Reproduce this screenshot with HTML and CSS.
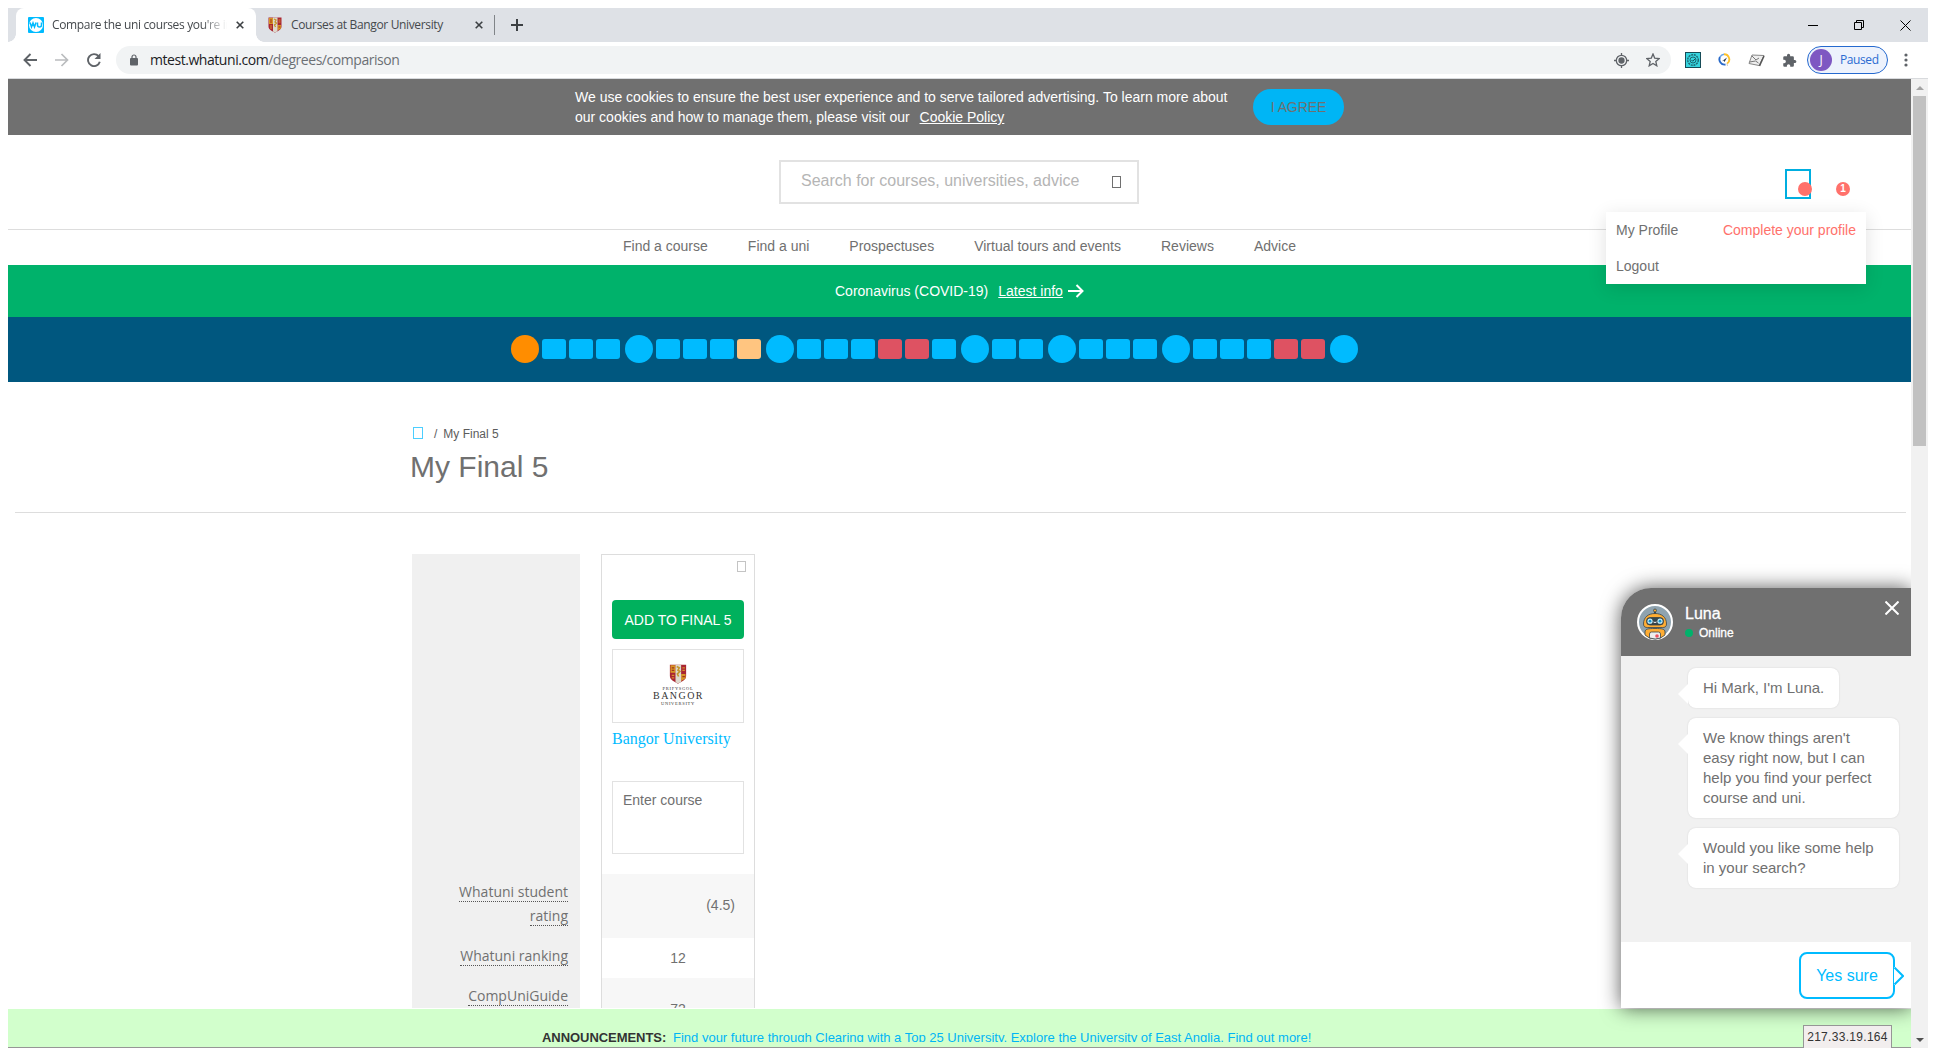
FILE: index.html
```html
<!DOCTYPE html>
<html lang="en">
<head>
<meta charset="utf-8">
<title>Compare the uni courses you're interested in</title>
<link rel="stylesheet" href="styles.css">
</head>
<body>
<div class="window">
  <header class="tabstrip">
    <div class="tab active">
      <svg class="favicon wu" viewBox="0 0 16 16"><rect width="16" height="16" rx="1" fill="#0bf"/><circle cx="8" cy="8" r="7" fill="#fff"/><path d="M2 5.500l1.500 4.500L5 6l1.500 4L8 5.500M9.500 5.500V8q0 2 2 2t2-2V5.500" fill="none" stroke="#0bf" stroke-width="1.500"/></svg>
      <span class="tab-title fade">Compare the uni courses you're in</span>
      <svg class="x" viewBox="0 0 8 8"><path d="M.7.7l6.600 6.600M7.300.7L.7 7.300" stroke="#3c4043" stroke-width="1.600"/></svg>
    </div>
    <div class="tab second">
      <svg class="favicon crest" viewBox="0 0 14 16"><use href="#crest"/></svg>
      <span class="tab-title">Courses at Bangor University</span>
      <svg class="x" viewBox="0 0 8 8"><path d="M.7.7l6.600 6.600M7.300.7L.7 7.300" stroke="#3c4043" stroke-width="1.600"/></svg>
    </div>
    <i class="tab-divider"></i>
    <svg class="plus" viewBox="0 0 12 12"><path d="M6 0v12M0 6h12" stroke="#3c4043" stroke-width="2"/></svg>
    <div class="win-controls">
      <svg width="10" height="10" viewBox="0 0 10 10"><path d="M0 5.500h10" stroke="#000"/></svg>
      <svg width="10" height="10" viewBox="0 0 10 10" fill="none" stroke="#000"><path d="M.5 2.500h7v7h-7zM2.500 2.500v-2h7v7h-2"/></svg>
      <svg width="11" height="11" viewBox="0 0 11 11"><path d="M.5.5l10 10M10.500.5l-10 10" stroke="#000"/></svg>
    </div>
  </header>
  <div class="toolbar">
    <svg class="back" viewBox="0 0 14 14"><path d="M14 7H2M7.500 1L1.500 7l6 6" fill="none" stroke="#5f6368" stroke-width="1.900"/></svg>
    <svg class="forward" viewBox="0 0 14 14"><path d="M0 7h12M6.500 1l6 6-6 6" fill="none" stroke="#babcbe" stroke-width="1.700"/></svg>
    <svg class="reload" viewBox="0 0 14 14"><path d="M11.600 3.200A6 6 0 1 0 12.800 8.800" fill="none" stroke="#5f6368" stroke-width="1.900"/><path d="M13.500 0v6H7.500z" fill="#5f6368"/></svg>
    <div class="omnibox">
      <svg class="lock" viewBox="0 0 8 12"><rect y="4" width="8" height="7.500" rx="1" fill="#5f6368"/><path d="M2 4.500V3a2 2 0 0 1 4 0v1.500" fill="none" stroke="#5f6368" stroke-width="1.200"/></svg>
      <span class="url"><b>mtest.whatuni.com</b>/degrees/comparison</span>
      <svg class="locate" viewBox="0 0 15 15" fill="none" stroke="#5f6368" stroke-width="1.300"><circle cx="7.500" cy="7.500" r="5.200"/><circle cx="7.500" cy="7.500" r="2.500" fill="#5f6368"/><path d="M7.500 0v2.500M7.500 12.500V15M0 7.500h2.500M12.500 7.500H15"/></svg>
      <svg class="star" viewBox="0 0 14 14"><path d="M7 1l1.700 4.100 4.500.4-3.400 2.900 1 4.400L7 10.500l-3.800 2.300 1-4.400L.8 5.500l4.500-.4z" fill="none" stroke="#5f6368" stroke-width="1.300"/></svg>
    </div>
    <div class="extensions">
      <svg width="16" height="16" viewBox="0 0 16 16"><rect x=".5" y=".5" width="15" height="15" fill="#37d5df" stroke="#164b57"/><circle cx="8" cy="8" r="5.300" fill="none" stroke="#1c6570" stroke-width="1.400" stroke-dasharray="2 .8"/><circle cx="8" cy="8" r="3" fill="none" stroke="#1c6570"/><path d="M6.500 8l1.200 1.200L10 7" fill="none" stroke="#164b57"/></svg>
      <svg width="13" height="14" viewBox="0 0 13 14" fill="none"><path d="M7.500 11.500A5.200 5.200 0 0 1 2 4" stroke="#2869c9" stroke-width="1.900"/><path d="M2 4a5.200 5.200 0 0 1 4-2.700" stroke="#6ba5e8" stroke-width="1.500"/><path d="M6 1.300a5.200 5.200 0 0 1 3 9.500" stroke="#ffc22c" stroke-width="1.900"/><path d="M9 10.500l.5 2.500" stroke="#ccc"/><path d="M3.500 8.500l5.500-4-2.500 4.500-1-1.500z" fill="#263649"/></svg>
      <svg width="17" height="13" viewBox="0 0 17 13"><path d="M4 1l12 .5-5 10L1 9.500z" fill="#eee" stroke="#888"/><path d="M4 2l4 4 3-2M1.500 8l6-1 3 2" fill="none" stroke="#777"/><path d="M16 2l-4.500 10" stroke="#555" stroke-width="1.500"/></svg>
      <svg width="15" height="15" viewBox="0 0 24 24"><path d="M20.500 11H19V7a2 2 0 0 0-2-2h-4V3.500a2.500 2.500 0 0 0-5 0V5H4a2 2 0 0 0-2 2v3.800h1.500a2.700 2.700 0 0 1 0 5.400H2V20a2 2 0 0 0 2 2h3.800v-1.500a2.700 2.700 0 0 1 5.400 0V22H17a2 2 0 0 0 2-2v-4h1.500a2.500 2.500 0 0 0 0-5z" fill="#5f6368"/></svg>
    </div>
    <div class="profile-chip"><span class="initial">J</span><span class="chip-label">Paused</span></div>
    <svg class="kebab" viewBox="0 0 4 14"><g fill="#5f6368"><circle cx="2" cy="2" r="1.600"/><circle cx="2" cy="7" r="1.600"/><circle cx="2" cy="12" r="1.600"/></g></svg>
  </div>

  <div class="viewport">
    <main class="page">
      <section class="cookie">
        <div class="notice"><p>We use cookies to ensure the best user experience and to serve tailored advertising. To learn more about</p><p>our cookies and how to manage them, please visit our <a>Cookie Policy</a></p></div>
        <button class="agree">I AGREE</button>
      </section>
      <section class="masthead">
        <div class="search"><span>Search for courses, universities, advice</span><i class="missing dark"></i></div>
        <div class="account"><span class="badge"></span></div>
        <span class="badge count">1</span>
      </section>
      <nav class="mainnav"><a>Find a course</a><a>Find a uni</a><a>Prospectuses</a><a>Virtual tours and events</a><a>Reviews</a><a>Advice</a></nav>
      <section class="covid"><span>Coronavirus (COVID-19)</span><a>Latest info</a><svg width="16" height="14" viewBox="0 0 16 14"><path d="M0 7h14.500M8.500 1l6 6-6 6" fill="none" stroke="#fff" stroke-width="2"/></svg></section>
      <section class="timeline">
        <i class="dot now"></i><i></i><i></i><i></i>
        <i class="dot"></i><i></i><i></i><i></i><i class="soon"></i>
        <i class="dot"></i><i></i><i></i><i></i><i class="late"></i><i class="late"></i><i></i>
        <i class="dot"></i><i></i><i></i>
        <i class="dot"></i><i></i><i></i><i></i>
        <i class="dot"></i><i></i><i></i><i></i><i class="late"></i><i class="late"></i>
        <i class="dot"></i>
      </section>
      <section class="heading">
        <div class="crumbs"><i class="missing blue"></i><span>/</span><span>My Final 5</span></div>
        <h1>My Final 5</h1>
      </section>
      <section class="compare">
        <aside class="labels">
          <div><span>Whatuni student rating</span></div>
          <div><span>Whatuni ranking</span></div>
          <div><span>CompUniGuide</span></div>
        </aside>
        <article class="uni">
          <div class="uni-top"><i class="missing grey"></i></div>
          <button class="add">ADD TO FINAL 5</button>
          <div class="logo">
            <svg width="18" height="20" viewBox="0 0 14 16"><g id="crest"><path d="M.5.5h13v9c0 3.500-4 4.500-6.500 6.200C4.500 14 .5 13 .5 9.500z" fill="#a92532"/><path d="M1 1h4v6H1zM9.500 8h3.500v3.500l-3.500 2z" fill="#d79624"/><path d="M5 .5h4.500v13.800L7 15.600 5 14.500z" fill="#ddd9cd"/><path d="M6 2l2 1-1 2 1.500 1-2 2 1 2" fill="none" stroke="#c4952b" stroke-width="1.300"/><path d="M2 3h2M2 5h2M10.500 10h2" stroke="#a3301d"/><path d="M10.500 3h2M10.500 5h2M2 9h2M2 11h2" stroke="#d9902b"/></g></svg>
            <span class="tiny">PRIFYSGOL</span><span class="name">BANGOR</span><span class="tiny low">UNIVERSITY</span>
          </div>
          <a class="uni-name">Bangor University</a>
          <div class="course">Enter course</div>
          <div class="row rating">(4.5)</div>
          <div class="row rank">12</div>
          <div class="row guide">72</div>
        </article>
      </section>
    </main>
    <div class="scrollbar"><i class="up"></i><i class="thumb"></i><i class="down"></i></div>

    <div class="menu"><div><span>My Profile</span><a>Complete your profile</a></div><div><span>Logout</span></div></div>

    <footer class="announce"><div><b>ANNOUNCEMENTS:</b><a>Find your future through Clearing with a Top 25 University. Explore the University of East Anglia. Find out more!</a></div></footer>

    <div class="chat-clip">
      <aside class="chat">
        <header>
          <svg class="avatar" viewBox="0 0 36 36"><circle cx="18" cy="18" r="17" fill="#8fa3af" stroke="#fff" stroke-width="2"/><g stroke="#36454b" stroke-width=".8"><path d="M18 10V6" stroke-width="2"/><circle cx="18" cy="6.500" r="1.500" fill="#ffad33"/><path d="M6.500 20c0-7 5-10.500 11.500-10.500S29.500 13 29.500 20c0 3-2 3.500-4 3.500h-15c-2 0-4-.5-4-3.500z" fill="#ffad33"/><rect x="9.500" y="13.500" width="17" height="7.500" rx="3.500" fill="#36454b"/><path d="M8 31v-3c0-3 3-3.500 10-3.500s10 .5 10 3.500v3q-4 4-10 4T8 31z" fill="#ffad33"/><path d="M12.500 34v-4q0-2 2-2h7q2 0 2 2v4q-5 2-11 0z" fill="#eee"/></g><circle cx="13" cy="17.200" r="2.600" fill="#c5f1ff"/><circle cx="23" cy="17.200" r="2.600" fill="#c5f1ff"/><circle cx="13" cy="17.200" r="1.400" fill="#1693cb"/><circle cx="23" cy="17.200" r="1.400" fill="#1693cb"/><path d="M16.500 18q1.500 1 3 0" stroke="#fff" fill="none"/><circle cx="20" cy="32" r="1.800" fill="#ec5262"/></svg>
          <div class="who"><strong>Luna</strong><span><i></i>Online</span></div>
          <svg class="close" viewBox="0 0 14 14"><path d="M.5.5l13 13M13.500.5l-13 13" stroke="#fff" stroke-width="2"/></svg>
        </header>
        <div class="messages">
          <p class="short">Hi Mark, I'm Luna.</p>
          <p>We know things aren't<br>easy right now, but I can<br>help you find your perfect<br>course and uni.</p>
          <p>Would you like some help<br>in your search?</p>
        </div>
        <div class="answers"><button>Yes sure<svg width="10" height="18" viewBox="0 0 10 18"><path d="M0 0h2L9 9l-7 9H0z" fill="#fff"/><path d="M.5.5L9 9 .5 17.500" fill="none" stroke="#0bf" stroke-width="2"/></svg></button></div>
      </aside>
    </div>
    <div class="ip">217.33.19.164</div>
  </div>
</div>
</body>
</html>
```
FILE: styles.css
```css
* { box-sizing: border-box; }
body { margin: 0; padding: 8px; width: 1936px; height: 1056px; overflow: hidden; background: #fff; color: #707070; font: 14px/20px "Liberation Sans", Arial, sans-serif; }
h1, p { margin: 0; font-weight: 400; }
button { font: inherit; border: 0; padding: 0; }
svg { flex: none; display: block; }
.window { width: 1920px; height: 1040px; display: flex; flex-direction: column; }

.tabstrip { height: 34px; background: #dee1e6; display: flex; align-items: center; padding-left: 8px; font: 12px/16px "Open Sans", sans-serif; color: #45494d; }
.tab { height: 34px; display: flex; align-items: center; position: relative; padding-left: 12px; }
.tab.active { width: 240px; background: #fff; border-radius: 8px 8px 0 0; }
.tab.active::before, .tab.active::after { content: ""; position: absolute; bottom: 0; width: 8px; height: 8px; }
.tab.active::before { left: -8px; background: radial-gradient(circle at 0 0, #dee1e6 7.500px, #fff 8px); }
.tab.active::after { right: -8px; background: radial-gradient(circle at 100% 0, #dee1e6 7.500px, #fff 8px); }
.tab.second { width: 238px; }
.favicon.wu { width: 16px; height: 16px; margin-right: 8px; }
.favicon.crest { width: 14px; height: 16px; margin-right: 9px; }
.tab-title { width: 175px; margin-right: 9px; white-space: nowrap; overflow: hidden; letter-spacing: -.35px; }
.tab.second .tab-title { margin-right: 9px; }
.fade { -webkit-mask-image: linear-gradient(90deg, #000 150px, transparent 175px); mask-image: linear-gradient(90deg, #000 150px, transparent 175px); }
.x { width: 8px; height: 8px; }
.tab-divider { width: 1px; height: 20px; background: #808488; margin-right: 16px; }
.plus { width: 12px; height: 12px; }
.win-controls { margin-left: auto; display: flex; align-items: center; gap: 36px; padding-right: 17px; height: 28px; }

.toolbar { height: 37px; border-bottom: 1px solid #d8dadd; display: flex; align-items: center; padding-left: 15px; }
.back, .forward, .reload { width: 14px; height: 14px; }
.forward, .reload { margin-left: 18px; }
.omnibox { width: 1555px; height: 28px; border-radius: 14px; background: #f1f3f4; margin-left: 15px; display: flex; align-items: center; padding: 0 11px 0 14px; }
.lock { width: 8px; height: 12px; margin-right: 12px; }
.url { font: 14px/20px "Open Sans", sans-serif; color: #6c7074; letter-spacing: -.45px; flex: 1; }
.url b { font-weight: 400; color: #202124; }
.locate { width: 15px; height: 15px; margin-right: 17px; }
.star { width: 14px; height: 14px; }
.extensions { display: flex; align-items: center; margin-left: 14px; gap: 17px; width: 112px; }
.profile-chip { margin-left: 10px; width: 81px; height: 28px; border: 1px solid #2569cf; border-radius: 14px; background: #edf2fc; color: #2a6bd2; display: flex; align-items: center; padding-left: 2px; font: 12px/16px "Open Sans", sans-serif; letter-spacing: -.4px; }
.initial { width: 22px; height: 22px; border-radius: 50%; background: #7e57c2; color: #fff; display: flex; align-items: center; justify-content: center; margin-right: 8px; }
.kebab { width: 4px; height: 14px; margin-left: 16px; }

.viewport { position: relative; height: 969px; display: flex; overflow: hidden; }
.page { width: 1903px; height: 969px; overflow: hidden; }
.cookie { height: 56px; background: #707070; color: #fff; display: flex; align-items: center; padding-left: 567px; }
.notice { width: 664px; margin-right: 14px; white-space: nowrap; }
.cookie a { text-decoration: underline; margin-left: 6px; }
.agree { width: 91px; height: 36px; border-radius: 18px; background: #00b5f5; color: #707070; letter-spacing: -.1px; }
.masthead { height: 95px; border-bottom: 1px solid #ddd; display: flex; align-items: flex-start; padding-left: 771px; }
.search { width: 360px; height: 44px; margin-top: 25px; border: 2px solid #e2e2e2; display: flex; align-items: center; padding: 0 16px 3px 20px; justify-content: space-between; font-size: 16px; color: #b5b5b5; }
.missing { display: block; border: 1px solid; }
.missing.dark { width: 9px; height: 12px; color: #707070; margin-top: 3px; }
.missing.blue { width: 10px; height: 12px; color: #4cceff; }
.missing.grey { width: 9px; height: 11px; color: #c4c4c4; }
.account { width: 26px; height: 30px; border: 2px solid #00aee0; margin: 34px 0 0 646px; padding: 11px 0 0 11px; }
.badge { display: flex; width: 14px; height: 14px; border-radius: 50%; background: #ff716b; color: #fff; font: bold 10px/14px "Liberation Sans", sans-serif; align-items: center; justify-content: center; }
.count { margin: 47px 0 0 25px; }
.mainnav { height: 35px; display: flex; gap: 40px; align-items: center; padding: 0 0 3px 615px; }
.covid { height: 52px; background: #00b26b; color: #fff; display: flex; align-items: center; padding-left: 827px; }
.covid a { text-decoration: underline; margin: 0 5px 0 10px; }
.timeline { height: 65px; background: #00577f; display: flex; align-items: flex-start; padding-left: 503px; gap: 3px; }
.timeline i { width: 24px; height: 20px; border-radius: 3px; background: #0bf; margin-top: 22px; }
.timeline .dot { width: 28px; height: 28px; border-radius: 50%; margin: 18px 0 0 2px; }
.timeline .now { background: #ff8d00; margin-left: 0; }
.timeline .soon { background: #ffc580; }
.timeline .late { background: #de5262; }
.heading { height: 131px; margin: 0 5px 41px 7px; border-bottom: 1px solid #ddd; padding: 42px 0 0 395px; }
.crumbs { display: flex; align-items: center; height: 20px; font-size: 12px; color: #5c5c5c; padding-left: 3px; }
.crumbs .missing { margin: 0 11px 3px 0; }
.crumbs span { margin-right: 6px; }
h1 { font-size: 30px; line-height: 36px; margin-top: 5px; }
.compare { height: 454px; overflow: hidden; display: flex; padding-left: 404px; }
.labels { width: 168px; background: #f0f0f0; padding: 326px 12px 0 40px; text-align: right; font: 14px/24px "Open Sans", sans-serif; margin-right: 21px; }
.labels div { margin-bottom: 16px; }
.labels span { border-bottom: 1px dotted #555; line-height: 24px; }
.uni { width: 154px; border: 1px solid #ddd; border-bottom: 0; display: flex; flex-direction: column; padding-top: 6px; }
.uni > * { flex-shrink: 0; }
.uni-top { height: 39px; display: flex; justify-content: flex-end; padding-right: 8px; }
.add { height: 39px; margin: 0 10px 10px; border-radius: 4px; background: #00b15d; color: #fff; }
.logo { height: 74px; margin: 0 10px 6px; border: 1px solid #e2e2e2; display: flex; flex-direction: column; align-items: center; padding-top: 14px; font-family: "Liberation Serif", serif; color: #333; }
.tiny { font-size: 4.500px; line-height: 6px; letter-spacing: .7px; margin-top: 2px; }
.tiny.low { margin-top: 1px; }
.name { font-size: 10px; line-height: 8px; letter-spacing: 1.450px; margin-right: -1px; }
.uni-name { height: 20px; margin: 0 10px 32px; font: 16px/20px "Liberation Serif", serif; color: #0bf; white-space: nowrap; }
.course { height: 73px; margin: 0 10px 20px; border: 1px solid #e2e2e2; padding: 8px 10px; }
.row { display: flex; align-items: center; justify-content: center; }
.rating { height: 64px; background: #f7f7f7; justify-content: flex-end; padding: 0 19px 3px 0; }
.rank { height: 40px; }
.guide { height: 64px; background: #f7f7f7; padding-bottom: 3px; }

.scrollbar { width: 17px; background: #f1f1f1; display: flex; flex-direction: column; align-items: center; }
.up { margin-top: 7px; border: 4px solid transparent; border-top: 0; border-bottom-color: #a3a3a3; }
.thumb { width: 13px; height: 350px; margin-top: 6px; background: #c1c1c1; }
.down { margin: auto 0 6px; border: 4px solid transparent; border-bottom: 0; border-top-color: #505050; }

.menu { position: absolute; left: 1598px; top: 133px; width: 260px; height: 72px; background: #fff; box-shadow: 0 4px 18px rgba(0,0,0,.12); padding: 0 10px; }
.menu div { height: 36px; display: flex; align-items: center; justify-content: space-between; }
.menu a { color: #ff716b; }
.announce { position: absolute; left: 0; top: 929px; width: 1903px; height: 40px; background: #d2ffcc; border-top: 1px solid #fff; border-bottom: 1px solid #969696; }
.announce div { height: 33px; overflow: hidden; padding: 19px 0 0 534px; white-space: nowrap; font-size: 13px; }
.announce b { display: inline-block; width: 131px; color: #333; letter-spacing: -.05px; }
.announce a { color: #00b5f5; }
.chat-clip { position: absolute; right: 17px; top: 460px; width: 330px; height: 509px; overflow: hidden; pointer-events: none; }
.chat { margin: 49px 0 0 40px; width: 290px; height: 420px; border-radius: 30px 0 0 0; box-shadow: 0 0 20px rgba(0,0,0,.65); background: #f1f1f1; display: flex; flex-direction: column; }
.chat header { height: 68px; border-radius: 30px 0 0 0; background: #707070; color: #fff; display: flex; align-items: flex-start; padding: 16px 12px 0 16px; }
.avatar { width: 36px; height: 36px; }
.who { margin-left: 12px; display: flex; flex-direction: column; flex: 1; }
.who strong { font: 16px/20px "Liberation Sans", sans-serif; -webkit-text-stroke: .3px #fff; }
.who span { display: flex; align-items: center; font-size: 12px; line-height: 18px; -webkit-text-stroke: .3px #fff; }
.who i { width: 8px; height: 8px; border-radius: 50%; background: #00b26b; margin-right: 6px; }
.close { width: 14px; height: 14px; margin-top: -3px; }
.messages { height: 286px; padding: 12px 12px 0 67px; display: flex; flex-direction: column; align-items: stretch; gap: 10px; font-size: 15px; }
.messages p { position: relative; background: #fff; border-radius: 8px; padding: 10px 15px; box-shadow: 0 0 2px rgba(0,0,0,.12); white-space: nowrap; }
.messages p::before { content: ""; position: absolute; left: -10px; top: 16px; border: 10px solid transparent; border-right-color: #fff; border-left: 0; }
.messages .short { align-self: flex-start; width: 151px; }
.answers { height: 66px; background: #fff; padding: 10px 16px 0 0; display: flex; justify-content: flex-end; }
.answers button { position: relative; width: 96px; height: 47px; border: 2px solid #0bf; border-radius: 8px; color: #0bf; background: #fff; font-size: 16px; }
.answers svg { position: absolute; right: -11px; top: 13px; }
.ip { position: absolute; left: 1795px; top: 946px; width: 89px; height: 23px; border: 1px solid #969696; border-bottom: 0; background: #f2eeee; color: #333; font: 12px/22px "Liberation Sans", sans-serif; text-align: center; letter-spacing: .3px; }
```
